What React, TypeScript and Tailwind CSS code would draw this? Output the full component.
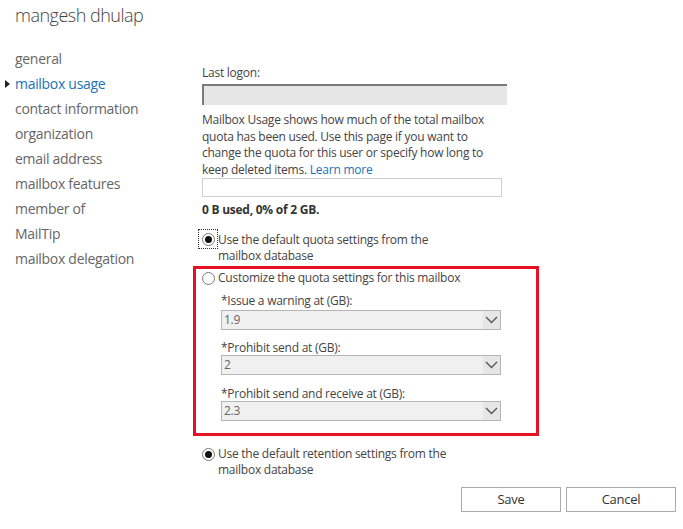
import React from "react";

const navItems = [
  "general",
  "mailbox usage",
  "contact information",
  "organization",
  "email address",
  "mailbox features",
  "member of",
  "MailTip",
  "mailbox delegation",
];

const Radio = ({ checked }: { checked?: boolean }) => (
  <span className="flex h-[13px] w-[13px] shrink-0 items-center justify-center rounded-full border border-[#7a7a7a] bg-white">
    {checked && <span className="h-[7px] w-[7px] rounded-full bg-[#111]" />}
  </span>
);

const Dropdown = ({ value }: { value: string }) => (
  <div className="flex h-[20px] w-[280px] items-stretch border border-[#b5b5b5] bg-[#f0f0f0]">
    <span className="flex-1 pl-[2px] leading-[18px] text-[#666]">{value}</span>
    <span className="flex w-[17px] items-center justify-center bg-[#e6e6e6]">
      <svg width="13" height="8" viewBox="0 0 13 8">
        <path d="M1 1l5.5 5.5L12 1" fill="none" stroke="#555" strokeWidth="1.4" />
      </svg>
    </span>
  </div>
);

export default function App() {
  return (
    <div
      className="h-[529px] w-[683px] overflow-hidden bg-white text-[12px] tracking-[-0.25px] text-[#444]"
      style={{ fontFamily: '"Open Sans", "Noto Sans", sans-serif' }}
    >
      {/* header */}
      <div className="h-[46px] pl-[15px] text-[18px] font-light leading-[30px] tracking-[-0.5px] text-[#444]">
        mangesh dhulap
      </div>

      <div className="flex">
        {/* left nav */}
        <ul className="w-[202px] shrink-0 pl-[15px] text-[14px] leading-[25px] tracking-[-0.3px] text-[#666]">
          {navItems.map((item, i) => (
            <li key={item} className={`relative ${i === 1 ? "text-[#1a73b9]" : ""}`}>
              {i === 1 && (
                <span className="absolute left-[-10px] top-[9px] h-0 w-0 border-y-[4px] border-l-[5px] border-y-transparent border-l-[#222]" />
              )}
              {item}
            </li>
          ))}
        </ul>

        {/* content */}
        <div className="w-[320px] pt-[19px] leading-[16px]">
          <div>Last logon:</div>
          <div className="mt-[3px] h-[21px] w-[305px] border-l-2 border-t-2 border-[#7a7a7a] bg-[#e6e6e6]" />

          <p className="mt-[7px] w-[300px] leading-[16.5px]">
            Mailbox Usage shows how much of the total mailbox quota has been used. Use this page if you
            want to change the quota for this user or specify how long to keep deleted items.
            <span className="ml-[3px] text-[#1a73b9]">Learn more</span>
          </p>
          <div className="h-[19px] w-[300px] border border-[#cfcfcf]" />

          <div className="mt-[5px] font-bold text-[#333]">0 B used, 0% of 2 GB.</div>

          <div className="mt-[11px] flex items-start">
            <span className="-ml-[4px] flex h-[20px] w-[20px] shrink-0 items-center justify-center border border-dotted border-[#333]">
              <Radio checked />
            </span>
            <span className="mt-[3px] w-[240px]">
              Use the default quota settings from the mailbox database
            </span>
          </div>

          {/* custom quota */}
          <div className="-ml-[9px] mt-[2px] h-[170px] w-[346px] border-[3px] border-[#e81123] pl-[6px] pt-[1px]">
            <div className="flex items-center gap-[3px]">
              <Radio />
              <span>Customize the quota settings for this mailbox</span>
            </div>
            <div className="pl-[19px] leading-[14px]">
              <div className="mt-[8px]">*Issue a warning at (GB):</div>
              <div className="mt-[2px]">
                <Dropdown value="1.9" />
              </div>
              <div className="mt-[11px]">*Prohibit send at (GB):</div>
              <Dropdown value="2" />
              <div className="mt-[12px]">*Prohibit send and receive at (GB):</div>
              <Dropdown value="2.3" />
            </div>
          </div>

          <div className="mt-[10px] flex items-start gap-[3px]">
            <span className="mt-[2px]">
              <Radio checked />
            </span>
            <span className="w-[240px]">Use the default retention settings from the mailbox database</span>
          </div>
        </div>
      </div>

      {/* buttons */}
      <div className="mt-[9px] flex justify-end gap-[5px] pr-[7px] text-[13px] text-[#333]">
        <button className="h-[25px] w-[100px] border border-[#ababab] bg-white">Save</button>
        <button className="h-[25px] w-[110px] border border-[#ababab] bg-white">Cancel</button>
      </div>
    </div>
  );
}
